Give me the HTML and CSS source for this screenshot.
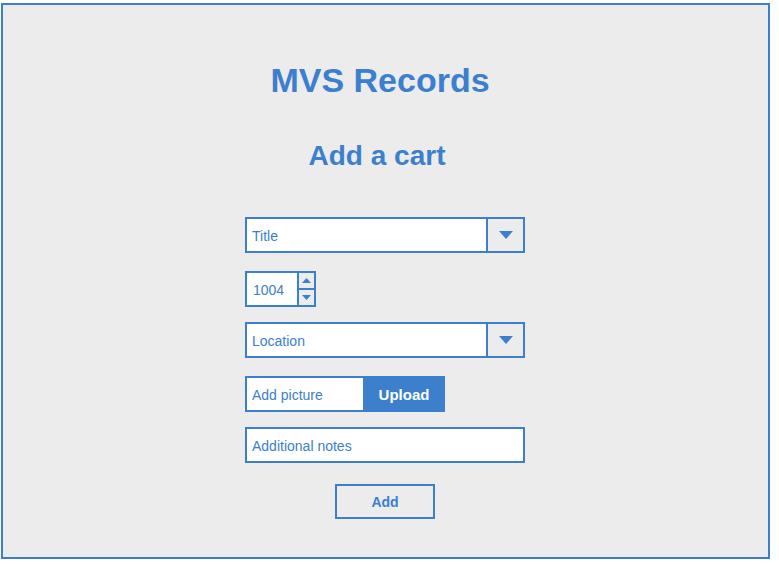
FILE: index.html
```html
<!DOCTYPE html>
<html>
<head>
<meta charset="utf-8">
<link rel="stylesheet" href="styles.css">
</head>
<body>
<div class="frame">
  <h1 class="title">MVS Records</h1>
  <h2 class="subtitle">Add a cart</h2>
  <div class="form">
    <div class="select field-title">
      <span class="select-text">Title</span>
      <div class="select-btn">
        <svg width="14" height="8" viewBox="0 0 14 8"><polygon points="0,0 14,0 7,8" fill="#3b7fcd"/></svg>
      </div>
    </div>
    <div class="number">
      <span class="number-text">1004</span>
      <div class="spinner">
        <div class="spin spin-up"><svg width="9" height="5" viewBox="0 0 9 5"><polygon points="0,5 9,5 4.5,0" fill="#3b7fcd"/></svg></div>
        <div class="spin spin-down"><svg width="9" height="5" viewBox="0 0 9 5"><polygon points="0,0 9,0 4.5,5" fill="#3b7fcd"/></svg></div>
      </div>
    </div>
    <div class="select field-location">
      <span class="select-text">Location</span>
      <div class="select-btn">
        <svg width="14" height="8" viewBox="0 0 14 8"><polygon points="0,0 14,0 7,8" fill="#3b7fcd"/></svg>
      </div>
    </div>
    <div class="upload-row">
      <div class="upload-input">Add picture</div>
      <div class="upload-btn">Upload</div>
    </div>
    <div class="notes">Additional notes</div>
    <div class="add-btn">Add</div>
  </div>
</div>
</body>
</html>
```

FILE: styles.css
```css
* { box-sizing: border-box; }
html, body { margin: 0; padding: 0; background: #ffffff; }
body { padding: 3px 0 0 1px; font-family: "Liberation Sans", Arial, sans-serif; color: #3b7fcd; }

.frame {
  width: 769px;
  height: 556px;
  border: 2px solid #3b7fcd;
  background: #ececec;
  padding-top: 55px;
}

.title {
  margin: 0;
  font-size: 34px;
  line-height: 40px;
  font-weight: bold;
  text-align: center;
  padding-right: 11px;
}

.subtitle {
  margin: 40px 0 0 0;
  font-size: 28px;
  line-height: 32px;
  font-weight: bold;
  text-align: center;
  padding-right: 17px;
}

.form {
  width: 280px;
  margin: 45px 0 0 242px;
  display: flex;
  flex-direction: column;
  align-items: flex-start;
  font-size: 14px;
}

.select {
  width: 280px;
  height: 36px;
  border: 2px solid #3b7fcd;
  background: #ffffff;
  display: flex;
  align-items: stretch;
}
.select-text {
  flex: 1;
  padding: 2px 0 0 5px;
  display: flex;
  align-items: center;
}
.select-btn {
  width: 37px;
  border-left: 2px solid #3b7fcd;
  background: #ececec;
  display: flex;
  align-items: center;
  justify-content: center;
}
.select-btn svg { display: block; }

.field-location { margin-top: 15px; }

.number {
  margin-top: 18px;
  width: 71px;
  height: 36px;
  border: 2px solid #3b7fcd;
  background: #ffffff;
  display: flex;
}
.number-text {
  width: 51px;
  padding: 2px 0 0 6px;
  display: flex;
  align-items: center;
}
.spinner {
  width: 18px;
  border-left: 2px solid #3b7fcd;
  background: #ececec;
  display: flex;
  flex-direction: column;
}
.spin {
  flex: 1;
  display: flex;
  align-items: center;
  justify-content: center;
}
.spin svg { display: block; }
.spin-up { border-bottom: 2px solid #3b7fcd; }

.upload-row {
  margin-top: 18px;
  display: flex;
  height: 36px;
}
.upload-input {
  width: 118px;
  border: 2px solid #3b7fcd;
  border-right: none;
  background: #ffffff;
  padding: 2px 0 0 5px;
  display: flex;
  align-items: center;
}
.upload-btn {
  width: 82px;
  background: #3b7fcd;
  color: #ffffff;
  font-weight: bold;
  font-size: 15px;
  padding-top: 1px;
  display: flex;
  align-items: center;
  justify-content: center;
}

.notes {
  margin-top: 15px;
  width: 280px;
  height: 36px;
  border: 2px solid #3b7fcd;
  background: #ffffff;
  padding: 2px 0 0 5px;
  display: flex;
  align-items: center;
}

.add-btn {
  align-self: center;
  margin-top: 21px;
  width: 100px;
  height: 35px;
  border: 2px solid #3b7fcd;
  font-weight: bold;
  display: flex;
  align-items: center;
  justify-content: center;
}
```
